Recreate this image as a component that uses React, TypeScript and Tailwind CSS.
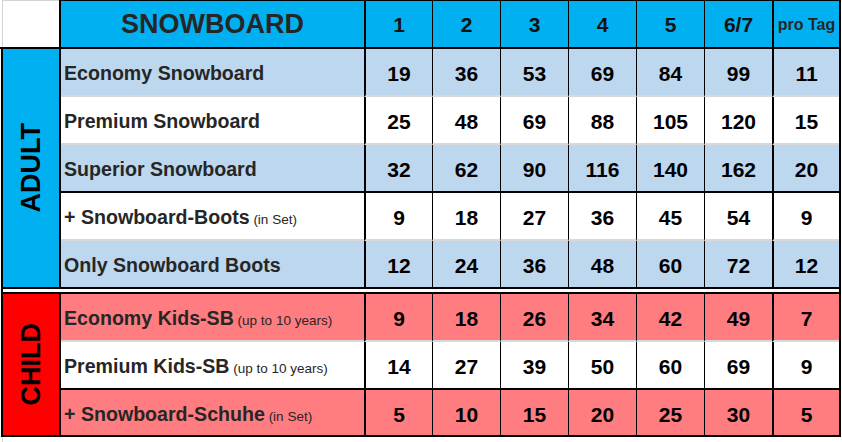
import React from "react";

type Row = {
  label: string;
  note?: string;
  vals: (number | string)[];
  bg: string;
  line: string;
  h: string;
};

const adult: Row[] = [
  { label: "Economy Snowboard", vals: [19, 36, 53, 69, 84, 99, 11], bg: "bg-[#bdd7ee]", line: "border-b-2 border-b-[#d9d9d9]", h: "h-[48px]" },
  { label: "Premium Snowboard", vals: [25, 48, 69, 88, 105, 120, 15], bg: "bg-white", line: "border-b-2 border-b-[#d9d9d9]", h: "h-[48px]" },
  { label: "Superior Snowboard", vals: [32, 62, 90, 116, 140, 162, 20], bg: "bg-[#bdd7ee]", line: "border-b-2 border-b-black", h: "h-[48px]" },
  { label: "+ Snowboard-Boots", note: "(in Set)", vals: [9, 18, 27, 36, 45, 54, 9], bg: "bg-white", line: "border-b-2 border-b-[#d9d9d9]", h: "h-[48px]" },
  { label: "Only Snowboard Boots", vals: [12, 24, 36, 48, 60, 72, 12], bg: "bg-[#bdd7ee]", line: "", h: "h-[46px]" },
];

const child: Row[] = [
  { label: "Economy Kids-SB", note: "(up to 10 years)", vals: [9, 18, 26, 34, 42, 49, 7], bg: "bg-[#ff7c80]", line: "border-b-2 border-b-[#d9d9d9]", h: "h-[48px]" },
  { label: "Premium Kids-SB", note: "(up to 10 years)", vals: [14, 27, 39, 50, 60, 69, 9], bg: "bg-white", line: "border-b-2 border-b-black", h: "h-[48px]" },
  { label: "+ Snowboard-Schuhe", note: "(in Set)", vals: [5, 10, 15, 20, 25, 30, 5], bg: "bg-[#ff7c80]", line: "", h: "h-[45px]" },
];

const colCls = [
  "w-[68px] border-l-2 border-l-black",
  "w-[68px] border-l border-l-black",
  "w-[68px] border-l border-l-black",
  "w-[68px] border-l border-l-black",
  "w-[68px] border-l border-l-black",
  "w-[68px] border-l border-l-black",
  "w-[67px] border-l-2 border-l-black",
];

function TableRow({ row }: { row: Row }) {
  return (
    <div className={`flex ${row.h}`}>
      <div className={`flex w-[303px] shrink-0 items-center pl-[3px] pt-[4px] ${row.bg} ${row.line}`}>
        <span className="whitespace-nowrap text-[19.6px] font-bold text-[#262626]">
          {row.label}
          {row.note && <span className="text-[13.5px] font-normal"> {row.note}</span>}
        </span>
      </div>
      {row.vals.map((v, i) => (
        <div
          key={i}
          className={`flex shrink-0 items-center justify-center pt-[4px] text-[21px] font-bold text-black ${colCls[i]} ${row.bg} ${row.line}`}
        >
          {v}
        </div>
      ))}
    </div>
  );
}

function Section({ title, rows, side, top }: { title: string; rows: Row[]; side: string; top?: boolean }) {
  return (
    <div className={`ml-[1px] flex w-[840px] border-x-2 border-b-2 border-black ${top ? "border-t-2" : ""}`}>
      <div className={`flex w-[58px] shrink-0 items-center justify-center border-r-2 border-black ${side}`}>
        <span className="rotate-180 text-[27px] font-bold leading-none text-black [writing-mode:vertical-rl]">
          {title}
        </span>
      </div>
      <div className="flex w-[778px] flex-col">
        {rows.map((r) => (
          <TableRow key={r.label} row={r} />
        ))}
      </div>
    </div>
  );
}

export default function App() {
  const heads = ["1", "2", "3", "4", "5", "6/7"];
  return (
    <div className="h-[442px] w-[842px] bg-white font-['Liberation_Sans',Arial,sans-serif]">
      <div className="flex h-[49px]">
        <div className="w-[59px] shrink-0 border-b-2 border-black bg-white">
          <div className="ml-[2px] h-full border-l border-t border-[#d4d4d4]" />
        </div>
        <div className="flex w-[782px] border-x-2 border-t border-b-2 border-black bg-[#00b0f0]">
          <div className="flex w-[303px] shrink-0 items-center justify-center pt-[1px] text-[27px] font-bold text-[#262626]">
            SNOWBOARD
          </div>
          {heads.map((h, i) => (
            <div
              key={h}
              className={`flex shrink-0 items-center justify-center pt-[1px] text-[21px] font-bold text-[#111] ${colCls[i]}`}
            >
              {h}
            </div>
          ))}
          <div className={`flex shrink-0 items-center justify-center pt-[1px] text-[16px] font-bold text-[#262626] ${colCls[6]}`}>
            pro Tag
          </div>
        </div>
      </div>

      <Section title="ADULT" rows={adult} side="bg-[#00b0f0]" />
      <div className="ml-[1px] h-[3px] w-[840px] border-x-2 border-black bg-white" />
      <Section title="CHILD" rows={child} side="bg-[#ff0000]" top />
      <div className="ml-[2px] h-[5px] border-l border-[#d4d4d4]" />
    </div>
  );
}
